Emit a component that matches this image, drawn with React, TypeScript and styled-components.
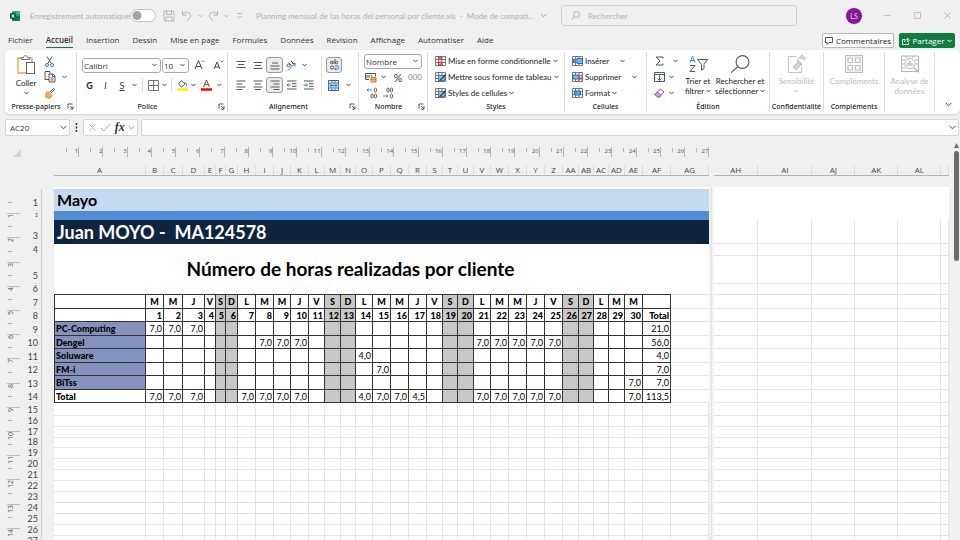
import React from "react";
import styled, { createGlobalStyle, css } from "styled-components";

const GlobalStyle = createGlobalStyle`
  *, *::before, *::after { box-sizing: border-box; }
  html, body { margin: 0; height: 100%; overflow: hidden; background: #f0f0f0; }
  body { font-family: "Open Sans", "Noto Sans", sans-serif; font-size: 8px; color: #333; }
  #root { height: 100%; }
  button, input, select { font: inherit; color: inherit; margin: 0; padding: 0; border: 0; background: none; outline: 0; }
  svg { display: block; flex: none; }
`;

/* ---------- window ---------- */

const Window = styled.div`
  display: flex;
  flex-direction: column;
  height: 100vh;
  overflow: hidden;
`;

const TitleBar = styled.header`
  display: flex;
  align-items: center;
  height: 31px;
  padding-left: 10px;
  font-family: Lato, sans-serif;
  color: #b0b0b0;
  flex: none;
`;

const AutoSave = styled.label`
  display: flex;
  align-items: center;
  justify-content: space-between;
  width: 146px;
  padding: 0 0 0 20px;
  margin-right: 7px;
  white-space: nowrap;
`;

const Brand = styled.span`
  width: 0;
`;

const Toggle = styled.input`
  appearance: none;
  width: 27px;
  height: 13px;
  border: 1px solid #c4c4c4;
  border-radius: 7px;
  background: radial-gradient(circle at 6px 50%, #a3a3a3 4px, #fff 5px);
`;

const QuickTools = styled.div`
  display: flex;
  align-items: center;
  gap: 2px;
  width: 93px;
`;

const DocTitle = styled.div`
  display: flex;
  align-items: center;
  gap: 6px;
  width: 305px;
  white-space: pre;
`;

const SearchBox = styled.label`
  display: flex;
  align-items: center;
  gap: 8px;
  flex: 0 1 236px;
  height: 21px;
  padding-left: 9px;
  border: 1px solid #d0d0d0;
  border-radius: 3px;
  input { flex: 1; min-width: 0; }
  input::placeholder { color: #b4b4b4; opacity: 1; }
`;

const WindowControls = styled.div`
  display: flex;
  align-items: center;
  gap: 21px;
  margin-left: auto;
  padding-right: 8px;
`;

const Avatar = styled.button`
  width: 16px;
  height: 16px;
  border-radius: 50%;
  background: #881798;
  color: #e6c8ea;
  font-size: 7px;
`;

/* ---------- tabs ---------- */

const TabBar = styled.nav`
  display: flex;
  align-items: flex-start;
  height: 19px;
  padding: 2px 5px 0 8px;
  gap: 13px;
  flex: none;
`;

const Tab = styled.button<{ $active?: boolean }>`
  height: 15px;
  line-height: 14px;
  white-space: nowrap;
  border-bottom: 1px solid ${(p) => (p.$active ? "#107c41" : "transparent")};
  font-weight: ${(p) => (p.$active ? 600 : 400)};
`;

const TabActions = styled.div`
  display: flex;
  gap: 5px;
  margin-left: auto;
`;

const ActionButton = styled.button<{ $primary?: boolean }>`
  display: flex;
  align-items: center;
  justify-content: center;
  gap: 3px;
  width: ${(p) => (p.$primary ? 56 : 72)}px;
  height: 15px;
  border-radius: 2px;
  border: 1px solid ${(p) => (p.$primary ? "#107c41" : "#b9b9b9")};
  background: ${(p) => (p.$primary ? "#107c41" : "#fff")};
  color: ${(p) => (p.$primary ? "#fff" : "#222")};
`;

/* ---------- ribbon ---------- */

const Ribbon = styled.section`
  display: flex;
  height: 64px;
  margin-left: 5px;
  padding: 2px 0;
  background: #fff;
  border-radius: 5px;
  box-shadow: 0 1px 2px #cfcfcf;
  font-family: Lato, sans-serif;
  flex: none;
`;

const Group = styled.div<{ $w: number }>`
  display: flex;
  flex-direction: column;
  flex: none;
  width: ${(p) => p.$w}px;
  border-right: 1px solid #dcdcdc;
`;

const GroupBody = styled.div<{ $pad?: number }>`
  display: flex;
  flex: 1;
  min-height: 0;
  padding-left: ${(p) => p.$pad ?? 0}px;
`;

const GroupLabel = styled.div`
  display: flex;
  align-items: center;
  height: 11px;
  font-family: "Noto Sans", sans-serif;
  font-size: 7px;
  font-weight: 500;
  color: #222;
  span { flex: 1; text-align: center; white-space: nowrap; }
  svg { margin-right: 2px; }
`;

const Stack = styled.div<{ $rows: number }>`
  display: grid;
  grid-template-rows: ${(p) => (p.$rows === 3 ? "repeat(3, 16px)" : "20px 20px")};
  align-content: start;
  padding-top: ${(p) => (p.$rows === 3 ? 1 : 3)}px;
`;

const Line = styled.div<{ $gap?: number }>`
  display: flex;
  align-items: center;
  gap: ${(p) => p.$gap ?? 0}px;
`;

const Tool = styled.button<{ $w?: number; $on?: boolean; $bold?: boolean; $italic?: boolean; $underline?: boolean; $large?: boolean }>`
  display: flex;
  align-items: center;
  justify-content: center;
  width: ${(p) => p.$w ?? 17}px;
  height: 16px;
  flex: none;
  font-size: ${(p) => (p.$large ? 11 : 9)}px;
  font-weight: ${(p) => (p.$bold ? 900 : 400)};
  font-style: ${(p) => (p.$italic ? "italic" : "normal")};
  text-decoration: ${(p) => (p.$underline ? "underline" : "none")};
  ${(p) => p.$on && css`border: 1px solid #9c9c9c; border-radius: 3px; background: #ebebeb;`}
`;

const TextTool = styled.button<{ $faint?: boolean }>`
  display: flex;
  align-items: center;
  gap: 2px;
  height: 16px;
  white-space: nowrap;
  color: ${(p) => (p.$faint ? "#888" : "#222")};
`;

const BigTool = styled.button<{ $w: number; $off?: boolean }>`
  display: flex;
  flex-direction: column;
  align-items: center;
  justify-content: flex-start;
  width: ${(p) => p.$w}px;
  padding-top: 3px;
  line-height: 10px;
  color: ${(p) => (p.$off ? "#bcbcbc" : "#222")};
  white-space: nowrap;
  > svg:first-child { margin-bottom: 3px; }
`;

const Inline = styled.span`
  display: flex;
  align-items: center;
  gap: 2px;
  height: 10px;
`;

const ThinRule = styled.i`
  width: 1px;
  height: 14px;
  margin: 0 3px;
  background: #dcdcdc;
`;

const TallRule = styled.i`
  width: 1px;
  height: 40px;
  margin: 4px 4px 0;
  background: #e2e2e2;
`;

const SelectWrap = styled.span<{ $w: number }>`
  display: grid;
  grid-template-columns: 1fr 8px;
  align-items: center;
  width: ${(p) => p.$w}px;
  height: 15px;
  border: 1px solid #aaa;
  border-radius: 3px;
  font-family: "Open Sans", sans-serif;
  select { appearance: none; grid-area: 1 / 1 / 2 / 3; padding-left: 1px; width: 100%; height: 13px; line-height: 13px; }
  svg { grid-area: 1 / 2; pointer-events: none; }
`;

const RibbonEnd = styled.div`
  display: flex;
  flex: 1;
  align-items: flex-end;
  justify-content: flex-end;
  padding: 0 8px 5px 0;
`;

/* ---------- formula bar ---------- */

const FormulaBar = styled.div`
  display: flex;
  align-items: center;
  height: 17px;
  margin: 5px 1px 0 5px;
  flex: none;
`;

const Field = styled.div<{ $w?: number }>`
  display: flex;
  align-items: center;
  justify-content: space-between;
  height: 17px;
  width: ${(p) => (p.$w ? p.$w + "px" : "auto")};
  flex: ${(p) => (p.$w ? "none" : "1")};
  padding: 0 2px 0 4px;
  background: #fff;
  border: 1px solid #d4d4d4;
  border-radius: 2px;
  input { min-width: 0; flex: 1; }
`;

const FxMark = styled.span`
  font: italic 700 12px "Liberation Serif", serif;
`;

/* ---------- sheet ---------- */

const SheetArea = styled.main`
  display: flex;
  flex: 1;
  min-height: 0;
  overflow: hidden;
`;

const SideBar = styled.aside`
  width: 54px;
  flex: none;
  display: flex;
  flex-direction: column;
`;

const Corner = styled.div`
  height: 53px;
  flex: none;
  padding: 13px 0 0 13px;
`;

const SideColumns = styled.div`
  display: flex;
  padding-left: 7px;
`;

const VRuler = styled.div`
  display: flex;
  flex-direction: column;
  width: 25px;
  height: 363px;
  font-size: 7px;
  color: #555;
`;

const VMark = styled.div`
  flex: 1;
  display: flex;
  flex-direction: column;
  justify-content: space-between;
  width: 13px;
  border-top: 1px solid #bdbdbd;
  &:first-child { border-color: transparent; }
  span { writing-mode: vertical-rl; transform: rotate(180deg); width: 7px; height: 9px; line-height: 7px; text-align: right; }
  &::after { content: ""; width: 4px; height: 1px; margin: 0 0 10px 1px; background: #b5b5b5; }
`;

const RowHeads = styled.div`
  width: 10px;
  border-right: 1px solid #c3c9ce;
`;

const RowHead = styled.div<{ $h: number }>`
  display: flex;
  align-items: flex-end;
  justify-content: flex-end;
  height: ${(p) => p.$h}px;
  padding-right: 3px;
  border-bottom: 1px solid #e6e6e6;
  font-family: Lato, sans-serif;
  font-size: ${(p) => (p.$h < 10 ? 5 : 9)}px;
  line-height: ${(p) => (p.$h < 10 ? 8 : p.$h > 20 ? 15 : 10)}px;
  color: #444;
`;

const Pane = styled.div<{ $grow?: boolean }>`
  display: flex;
  flex-direction: column;
  flex: ${(p) => (p.$grow ? "1" : "none")};
  min-width: 0;
  overflow: hidden;
`;

const HRuler = styled.div`
  display: flex;
  height: 10px;
  margin: 11px 0 8px 1px;
  font-size: 6px;
  color: #555;
`;

const HMark = styled.div`
  flex: 1 1 0;
  display: flex;
  justify-content: space-between;
  border-right: 1px solid #b5b5b5;
  line-height: 8px;
  &::before { content: ""; width: 1px; height: 4px; margin: 1px 0 0 11px; background: #b5b5b5; }
`;

const ColHeads = styled.div`
  display: flex;
  height: 11px;
  border-bottom: 1px solid #b4b4b4;
`;

const ColHead = styled.div<{ $w: number }>`
  width: ${(p) => p.$w}px;
  flex: none;
  border-right: 1px solid #dedede;
  text-align: center;
  line-height: 10px;
  color: #444;
  &:last-child { flex: 1; }
`;

const Page = styled.div`
  flex: 1;
  min-height: 0;
  overflow: hidden;
  margin-top: 11px;
  padding-top: 2px;
  background: #fff;
`;

const Grid = styled.table<{ $fill?: boolean }>`
  table-layout: fixed;
  border-collapse: separate;
  border-spacing: 0;
  width: ${(p) => (p.$fill ? "100%" : "655px")};
  font-family: Lato, sans-serif;
  font-size: 9px;
  line-height: 9px;
  color: #000;
`;

const Col = styled.col<{ $w?: number }>`
  width: ${(p) => (p.$w ? p.$w + "px" : "auto")};
`;

const GridRow = styled.tr<{ $h: number }>`
  height: ${(p) => p.$h}px;
`;

const Blank = styled.td<{ $v?: boolean; $h?: boolean }>`
  padding: 0;
  border: 0 solid #e4e4e4;
  border-right-width: ${(p) => (p.$v ? 1 : 0)}px;
  border-bottom-width: ${(p) => (p.$h ? 1 : 0)}px;
`;

const Banner = styled.td<{ $bg: string; $size: number; $white?: boolean }>`
  padding: 0 3px;
  background: ${(p) => p.$bg};
  color: ${(p) => (p.$white ? "#fff" : "#000")};
  font-size: ${(p) => p.$size}px;
  line-height: ${(p) => (p.$size > 10 ? 22 : 5)}px;
  font-weight: 700;
  white-space: pre;
`;

const Heading = styled.td`
  padding: 0 0 2px 4px;
  text-align: center;
  font-size: 19px;
  line-height: 24px;
  font-weight: 700;
  color: #000;
`;

const TopEdge = styled.td`
  padding: 0;
  border-bottom: 1px solid #333;
`;

const Cell = styled.td<{ $gray?: boolean; $strong?: boolean; $align?: string; $first?: boolean; $blue?: boolean }>`
  padding: 0 1px;
  border: 0 solid #333;
  border-width: 0 1px 1px ${(p) => (p.$first ? 1 : 0)}px;
  background: ${(p) => (p.$blue ? "#8592bd" : p.$gray ? "#c8c8c8" : "#fff")};
  font-weight: ${(p) => (p.$strong ? 900 : 400)};
  text-align: ${(p) => p.$align ?? "right"};
  white-space: nowrap;
`;

const Divider = styled.div`
  width: 5px;
  flex: none;
  margin-top: 51px;
  border-left: 2px solid #f0f0f0;
  border-right: 2px solid #f4f4f4;
  background: #e2e2e2;
`;

const ScrollTrack = styled.div`
  display: flex;
  flex-direction: column;
  align-items: center;
  gap: 3px;
  width: 11px;
  flex: none;
  padding: 7px 0 0 3px;
`;

const Thumb = styled.div`
  width: 5px;
  height: 110px;
  border-radius: 3px;
  background: #6c6c6c;
`;

/* ---------- icons ---------- */

type IconProps = { w?: number; h?: number; box?: string; color?: string; sw?: number; children: React.ReactNode };
const Icon = ({ w = 12, h, box, color = "#555", sw = 1, children }: IconProps) => (
  <svg width={w} height={h ?? w} viewBox={box ?? `0 0 ${w} ${h ?? w}`} fill="none" stroke={color} strokeWidth={sw} aria-hidden="true">
    {children}
  </svg>
);

const Chevron = ({ color = "#444", big }: { color?: string; big?: boolean }) => (
  <Icon w={big ? 7 : 5} h={big ? 5 : 4} box="0 0 7 5" color={color} sw={big ? 1 : 1.4}><path d="M.7 1 3.5 3.8 6.3 1" /></Icon>
);

const Launcher = () => (
  <Icon w={7} color="#444" sw={0.9}><path d="M1 5.5V1h4.5M3 3l3 3M6 3.2V6H3.2" /></Icon>
);

const ExcelLogo = () => (
  <Icon w={10} h={10} color="none">
    <rect x="2" width="8" height="10" rx="1" fill="#21a366" />
    <path d="M6 0h3a1 1 0 0 1 1 1v2H6z" fill="#33c481" />
    <path d="M2 5h8v4a1 1 0 0 1-1 1H3a1 1 0 0 1-1-1z" fill="#107c41" />
    <rect y="2" width="6" height="6" rx="1" fill="#0b5c30" />
    <path d="m1.7 3.3 2.6 3.4M4.3 3.3 1.7 6.7" stroke="#fff" strokeWidth="1" />
  </Icon>
);

const SaveIcon = () => <Icon w={12} color="#b4b4b4"><path d="M1 1h9l1 1v9H2l-1-1zM3.5 1v3.5h5V1M3 11V7h6v4" /></Icon>;
const UndoIcon = ({ flip }: { flip?: boolean }) => (
  <Icon w={11} h={12} color="#b4b4b4"><path d={flip ? "M9.5 1v4h-4M9.3 4.8C7.5 2 4.5 1.5 2.5 3.3 0 6 2 8 5.5 11" : "M1.5 1v4h4M1.7 4.8C3.5 2 6.5 1.5 8.5 3.3 11 6 9 8 5.5 11"} /></Icon>
);
const CustomizeIcon = () => <Icon w={7} h={8} color="#b4b4b4"><path d="M1 1.500h5M1.500 4 3.500 6 5.500 4" /></Icon>;

const PasteIcon = () => (
  <Icon w={18} h={20}>
    <path d="M5 3H1v15h8M12 3h3v4" stroke="#e8a33d" strokeWidth="1.3" />
    <path d="M4.500 4.500v-2h2C6.500 0 10.500 0 10.500 2.500h2v2z" stroke="#777" />
    <rect x="9.500" y="7.500" width="8" height="11" stroke="#666" fill="#fff" />
  </Icon>
);
const CutIcon = () => <Icon w={11} h={11}><path d="M3 .5 7.200 7.500M8 .5 3.800 7.500" /><circle cx="3" cy="9" r="1.500" stroke="#2b7cd3" /><circle cx="8" cy="9" r="1.500" stroke="#2b7cd3" /></Icon>;
const CopyIcon = () => <Icon w={12} h={12}><path d="M5 8.500H1v-8h5V2M5 3h4l2 2v6H5zM8.500 3v2.500H11M6.500 7h3M6.500 9h3" /></Icon>;
const BrushIcon = () => <Icon w={11}><path d="m6 4 3.500-3.500 1 1L7 5" /><path d="M4 3.500 8 7.500 5.500 10.500 1 8.500 3 7 1.500 6z" fill="#f3b064" stroke="#d9822b" /></Icon>;

const BordersIcon = () => <Icon w={11} color="#777"><path d="M.5.5h10v10H.5zM5.500.5v10M.5 5.500h10" /></Icon>;
const FillIcon = () => <Icon w={11} h={12}><path d="M4.500 1.500 8 5 4.500 8 1.500 5z" /><path d="M7.500 3.500c2 0 2 2 2 3.500" stroke="#2b7cd3" /><path d="M0 10.500h11" stroke="#fff200" strokeWidth="2.500" /></Icon>;
const FontColorIcon = () => <Icon w={11} h={12}><path d="M2.500 8 5.500 1l3 7M3.500 5.700h4" /><path d="M0 10.500h11" stroke="#f00" strokeWidth="2.500" /></Icon>;
const GrowA = ({ small }: { small?: boolean }) => (
  <Icon w={11} h={12} color="#444"><path d={small ? "M1 10 4 3l3 7M2 8h4" : "M1 10 4.500 1.500 8 10M2.300 7.500h4.400"} /><path d={small ? "m7.500 1.500 1.500 1.500 1.500-1.500" : "M7.500 3 9 1.500 10.500 3"} stroke="#2b7cd3" strokeWidth=".9" /></Icon>
);

const BarsIcon = ({ d }: { d: string }) => <Icon w={10} h={10} color="#444" sw={0.9}><path d={d} /></Icon>;
const ALIGN = {
  top: "M.5 1.500h9M2 4.500h6M.5 7.500h9",
  middle: "M.5 2.500h9M2 5.500h6M.5 8.500h9",
  bottom: "M2 3h6M.5 6h9M.5 9h9",
  left: "M.5 1h9M.5 4h6M.5 7h9M.5 9.500h6",
  center: "M.5 1h9M2 4h6M.5 7h9M2 9.500h6",
  right: "M.5 1h9M3.500 4h6M.5 7h9M3.500 9.500h6",
};
const OrientIcon = () => <Icon w={11}><path d="M2 10.500 9 3.500M6 3.500h3v3" stroke="#2b7cd3" /><circle cx="2.500" cy="5.500" r="1.500" /><path d="M2.500 2.500 5.500 5.500M5 1l2 2" /></Icon>;
const IndentIcon = ({ out }: { out?: boolean }) => <Icon w={11} h={10}><path d="M1 1h9.500M6 3.700h4.500M6 6.300h4.500M1 9h9.500" /><path d={out ? "M5 5H1M2.500 3.500 1 5l1.500 1.500" : "M.5 5h4M3 3.500 4.500 5 3 6.500"} stroke="#2b7cd3" /></Icon>;
const WrapIcon = () => <Icon w={11} h={12}><circle cx="2.500" cy="3.500" r="1.300" /><path d="M4 2v3M6 0v5" /><circle cx="7.500" cy="3.500" r="1.300" /><circle cx="3" cy="8.500" r="1.500" /><path d="M5.500 7h3c2 0 2 3 0 3H5.500M7 8.500 5.500 10 7 11.500" stroke="#2b7cd3" /></Icon>;
const MergeIcon = () => <Icon w={11}><path d="M.5.5h10v10H.5zM4 .5v2M7 .5v2M4 8.500v2M7 8.500v2" /><rect x=".5" y="3" width="10" height="5" fill="#b9dcf5" stroke="#2b7cd3" /><path d="M2 5.500h7M3.500 4.300 2 5.500l1.500 1.200M7.500 4.300 9 5.500 7.500 6.700" stroke="#2b7cd3" /></Icon>;
const MoneyIcon = () => <Icon w={12} h={11}><path d="M.5 1.500h10v3M.5 1.500v6H4M4 3v3M2 3v3M6.500 3v1.500" /><path d="M6 5.500h5v4.500H6zM6 7.700h5" fill="#f6c08b" stroke="#d9722b" /></Icon>;
const DecimalIcon = ({ less }: { less?: boolean }) => (
  <Icon w={12} h={12} sw={0.9}>
    <path d={less ? "M1 9h5M4.500 7.500 6 9 4.500 10.500" : "M6 3H1M2.500 1.500 1 3l1.500 1.500"} stroke="#2b7cd3" />
    <ellipse cx="9.500" cy="3" rx="1.200" ry="2" /><ellipse cx="9.500" cy="9" rx="1.200" ry="2" />
    {less ? <ellipse cx="6" cy="3" rx="1.200" ry="2" /> : <ellipse cx="6" cy="9" rx="1.200" ry="2" />}
  </Icon>
);

const TableIcon = ({ kind }: { kind: "cond" | "table" | "style" | "insert" | "delete" | "format" }) => (
  <Icon w={11} h={10}>
    <path d="M.5.5h10v9H.5zM.5 3.500h10M.5 6.500h10M3.500.5v9M7 .5v9" stroke="#777" />
    {kind === "cond" && <path d="M3.500 1h3v2.500h-3zM3.500 6h3.500v3H3.500z" fill="#e98a92" stroke="#c8323f" />}
    {(kind === "table" || kind === "style") && <><path d="M3.500 3.500h6v5h-6z" fill="#9ccbf0" stroke="#2b7cd3" /><path d="M10.500 2.500 5 8.500" stroke="#444" strokeWidth="1.400" /></>}
    {kind === "insert" && <path d="M5 2.500h5.500v5H5zM4.500 5H1M2.500 3.500 1 5l1.500 1.500" fill="#7db9ec" stroke="#1d72c8" />}
    {kind === "delete" && <><path d="M1 3h6v4H1z" fill="#7db9ec" stroke="#1d72c8" /><path d="m6 4 4.500 5M10.500 4 6 9" stroke="#d04040" /></>}
    {kind === "format" && <path d="M2.500 3h6v4h-6z" fill="#5aa6e6" stroke="#1d72c8" />}
  </Icon>
);

const SigmaIcon = () => <Icon w={9} h={10}><path d="M8 2.500V1H1l4 4-4 4h7V7.500" /></Icon>;
const FillDownIcon = () => <Icon w={11} h={10}><path d="M.5.5h10v9H.5zM.5 2.500h10" /><path d="M5.500 3.500v5M3.500 6.500l2 2 2-2" stroke="#1d72c8" /></Icon>;
const EraserIcon = () => <Icon w={11} h={10} color="#a33fb5"><path d="M6.500 1 10 4 5.500 9H3.500L1 6.500z" /><path d="M1 6.500 3.500 4 7 7.300 5.500 9H3.500z" fill="#dba5e3" /></Icon>;
const SortIcon = () => <Icon w={19} h={18}><path d="M1 7.500 3.500 1 6 7.500M2 5.500h3" stroke="#2b88d8" /><path d="M1 10.500h5l-5 6h5" /><path d="M8.500 4.500h10L15 9.500v4l-2.500 1.500V9.500z" /></Icon>;
const FindIcon = () => <Icon w={20} h={18} sw={1.1}><circle cx="12.500" cy="7" r="6.400" /><path d="M8 11.500 1 17.800" /></Icon>;
const SensIcon = () => <Icon w={18} h={18} color="#c4c4c4"><path d="M.5 1.500h8M.5 1.500v16h13V12" /><path d="m5 12 6-6 3 3-6 6zM13 2l4 4M10 4l4-4 4 4" fill="#d5d5d5" /><path d="m9 5 5 5" strokeWidth="2" /></Icon>;
const AddinIcon = () => <Icon w={18} h={18} color="#bdbdbd" sw={1.2}><path d="M.6.6h16.800v16.800H.6z" /><path d="M3 3h4.500v4.500H3zM10.500 3H15v4.500h-4.500zM3 10.500h4.500V15H3zM10.500 10.500H15V15h-4.500z" /></Icon>;
const AnalyseIcon = () => <Icon w={18} h={18} color="#b4b4b4"><path d="M.5 1h17v15.500H.5zM.5 5h4M.5 9h3M.5 13h4M14 5h3.500M15 9h2.500M5 1v2M12 1v2" /><circle cx="9" cy="8.500" r="5" fill="#fff" /><path d="M7 11V7.500M9 11V5.500M11 11V8M13 12.500l4.500 5" strokeWidth="1.300" /></Icon>;

/* ---------- data ---------- */

const COLS: [string, number][] = [
  ["A", 92], ["B", 18], ["C", 19], ["D", 22], ["E", 11], ["F", 10], ["G", 12], ["H", 18], ["I", 18], ["J", 17], ["K", 18],
  ["L", 16], ["M", 16], ["N", 15], ["O", 17], ["P", 18], ["Q", 18], ["R", 18], ["S", 16], ["T", 15], ["U", 16], ["V", 17],
  ["W", 18], ["X", 18], ["Y", 18], ["Z", 18], ["AA", 16], ["AB", 15], ["AC", 15], ["AD", 16], ["AE", 18], ["AF", 28], ["AG", 38],
];
const RIGHT_COLS: [string, number][] = [["AH", 44], ["AI", 54], ["AJ", 43], ["AK", 43], ["AL", 43], ["", 9]];
const ROW_H = [22, 9, 24, 12, 28, 11, 14, 13, 14, 13, 14, 13, 14, 13, 13, 11, 11, 10, 11, 11, 11, 11, 11, 11, 11, 11, 11];
const WEEK = "MMJVSDLMMJVSDLMMJVSDLMMJVSDLMM".split("");
const isWeekend = (day: number) => WEEK[day - 1] === "S" || WEEK[day - 1] === "D";

const fill = (days: number[], v: string) => Object.fromEntries(days.map((d) => [d, v])) as Record<number, string>;
const CLIENTS: { name: string; hours: Record<number, string>; total: string }[] = [
  { name: "PC-Computing", hours: fill([1, 2, 3], "7,0"), total: "21,0" },
  { name: "Dengel", hours: fill([8, 9, 10, 21, 22, 23, 24, 25], "7,0"), total: "56,0" },
  { name: "Soluware", hours: { 14: "4,0" }, total: "4,0" },
  { name: "FM-i", hours: { 15: "7,0" }, total: "7,0" },
  { name: "BiTss", hours: { 30: "7,0" }, total: "7,0" },
  { name: "Total", hours: { ...fill([1, 2, 3, 7, 8, 9, 10, 15, 16, 21, 22, 23, 24, 25, 30], "7,0"), 14: "4,0", 17: "4,5" }, total: "113,5" },
];
const TABS = ["Fichier", "Accueil", "Insertion", "Dessin", "Mise en page", "Formules", "Données", "Révision", "Affichage", "Automatiser", "Aide"];

const Sheet = () => (
  <Grid>
    <colgroup>{COLS.map(([n, w]) => <Col key={n} $w={w} />)}</colgroup>
    <tbody>
      <GridRow $h={22}><Banner colSpan={33} $bg="#c5d9f1" $size={16}>Mayo</Banner></GridRow>
      <GridRow $h={9}><Banner colSpan={33} $bg="#538dd5" $size={5} /></GridRow>
      <GridRow $h={24}><Banner colSpan={33} $bg="#0f243e" $size={18} $white>{"Juan MOYO -  MA124578"}</Banner></GridRow>
      <GridRow $h={12}><Blank colSpan={33} /></GridRow>
      <GridRow $h={28}><Heading colSpan={31}>Número de horas realizadas por cliente</Heading><Blank colSpan={2} /></GridRow>
      <GridRow $h={11}><TopEdge colSpan={32} /><Blank $h /></GridRow>
      <GridRow $h={14}>
        <Cell $first />
        {WEEK.map((d, i) => <Cell key={i} $strong $align="center" $gray={isWeekend(i + 1)}>{d}</Cell>)}
        <Cell /><Blank $h />
      </GridRow>
      <GridRow $h={13}>
        <Cell $first />
        {WEEK.map((_, i) => <Cell key={i} $strong $gray={isWeekend(i + 1)}>{i + 1}</Cell>)}
        <Cell $strong>Total</Cell><Blank $h />
      </GridRow>
      {CLIENTS.map((c, r) => (
        <GridRow key={c.name} $h={ROW_H[8 + r]}>
          <Cell $first $strong $align="left" $blue={c.name !== "Total"}>{c.name}</Cell>
          {WEEK.map((_, i) => <Cell key={i} $gray={isWeekend(i + 1)}>{c.hours[i + 1]}</Cell>)}
          <Cell>{c.total}</Cell><Blank $h />
        </GridRow>
      ))}
      {ROW_H.slice(14).map((h, r) => (
        <GridRow key={r} $h={h}>{COLS.map(([n]) => <Blank key={n} $v $h />)}</GridRow>
      ))}
    </tbody>
  </Grid>
);

const SideSheet = () => (
  <Grid $fill>
    <colgroup>{RIGHT_COLS.map(([n, w], i) => <Col key={n} $w={i === 5 ? undefined : w} />)}</colgroup>
    <tbody>
      {ROW_H.map((h, r) => (
        <GridRow key={r} $h={h}>{RIGHT_COLS.map(([n]) => <Blank key={n} $v={r > 1} $h={r > 1} />)}</GridRow>
      ))}
    </tbody>
  </Grid>
);

export default function App() {
  return (
    <>
      <GlobalStyle />
      <Window>
        <TitleBar>
          <Brand><ExcelLogo /></Brand>
          <AutoSave>Enregistrement automatique <Toggle type="checkbox" /></AutoSave>
          <QuickTools>
            <Tool aria-label="Enregistrer" $w={12}><SaveIcon /></Tool>
            <Tool aria-label="Annuler" $w={19}><UndoIcon /></Tool>
            <Chevron color="#b4b4b4" />
            <Tool aria-label="Rétablir" $w={17}><UndoIcon flip /></Tool>
            <Chevron color="#b4b4b4" />
            <Tool aria-label="Personnaliser"><CustomizeIcon /></Tool>
          </QuickTools>
          <DocTitle>
            <span>Planning mensual de las horas del personal por cliente.xls  -  Mode de compati...</span>
            <Chevron color="#a0a0a0" big />
          </DocTitle>
          <SearchBox>
            <Icon w={9} h={10} color="#b4b4b4"><circle cx="5.500" cy="3.500" r="3" /><path d="M3.300 5.700.5 9" /></Icon>
            <input type="search" placeholder="Rechercher" aria-label="Rechercher" />
          </SearchBox>
          <WindowControls>
            <Avatar>LS</Avatar>
            <Tool aria-label="Réduire" $w={9}><Icon w={7} color="#c4c4c4"><path d="M0 3.500h7" /></Icon></Tool>
            <Tool aria-label="Agrandir" $w={9}><Icon w={7} color="#c4c4c4"><path d="M.5.5h6v6h-6z" /></Icon></Tool>
            <Tool aria-label="Fermer" $w={9}><Icon w={7} color="#b4b4b4"><path d="m.5.5 6 6M6.500.5l-6 6" /></Icon></Tool>
          </WindowControls>
        </TitleBar>

        <TabBar>
          {TABS.map((t) => <Tab key={t} $active={t === "Accueil"}>{t}</Tab>)}
          <TabActions>
            <ActionButton>
              <Icon w={8} h={8} color="#444" sw={0.9}><path d="M.5.5h7v5H4L2 7.500v-2H.5z" /></Icon>Commentaires
            </ActionButton>
            <ActionButton $primary>
              <Icon w={8} h={8} color="#fff" sw={0.9}><path d="M3 2.500H.5v5h6V5.500M2.500 5c0-2 1.500-2.500 3-2.500V1l2 2-2 2V3.500" /></Icon>Partager
              <Chevron color="#fff" />
            </ActionButton>
          </TabActions>
        </TabBar>

        <Ribbon>
          <Group $w={72}>
            <GroupBody $pad={6}>
              <BigTool $w={30}><PasteIcon />Coller<Inline><Chevron /></Inline></BigTool>
              <Stack $rows={3}>
                <Line><Tool aria-label="Couper"><CutIcon /></Tool></Line>
                <Line><Tool aria-label="Copier"><CopyIcon /></Tool><Tool aria-label="Options de copie" $w={12}><Chevron /></Tool></Line>
                <Line><Tool aria-label="Reproduire la mise en forme"><BrushIcon /></Tool></Line>
              </Stack>
            </GroupBody>
            <GroupLabel><span>Presse-papiers</span><Launcher /></GroupLabel>
          </Group>

          <Group $w={151}>
            <GroupBody $pad={5}>
              <Stack $rows={2}>
                <Line $gap={1}>
                  <SelectWrap $w={79}><select aria-label="Police"><option>Calibri</option></select><Chevron /></SelectWrap>
                  <SelectWrap $w={27}><select aria-label="Taille"><option>10</option></select><Chevron /></SelectWrap>
                  <Tool aria-label="Agrandir la police" $w={19}><GrowA /></Tool>
                  <Tool aria-label="Réduire la police" $w={16}><GrowA small /></Tool>
                </Line>
                <Line>
                  <Tool $w={15} $bold>G</Tool>
                  <Tool $w={17} $italic>I</Tool>
                  <Tool $w={16} $underline>S</Tool>
                  <Tool aria-label="Options de soulignement" $w={9}><Chevron /></Tool>
                  <ThinRule />
                  <Tool aria-label="Bordures" $w={14}><BordersIcon /></Tool>
                  <Tool aria-label="Options de bordure" $w={8}><Chevron /></Tool>
                  <ThinRule />
                  <Tool aria-label="Remplissage" $w={14}><FillIcon /></Tool>
                  <Tool aria-label="Options de remplissage" $w={9}><Chevron /></Tool>
                  <Tool aria-label="Couleur de police" $w={17}><FontColorIcon /></Tool>
                  <Tool aria-label="Options de couleur" $w={9}><Chevron /></Tool>
                </Line>
              </Stack>
            </GroupBody>
            <GroupLabel><span>Police</span><Launcher /></GroupLabel>
          </Group>

          <Group $w={131}>
            <GroupBody $pad={4}>
              <Stack $rows={2}>
                <Line>
                  <Tool aria-label="Aligner en haut"><BarsIcon d={ALIGN.top} /></Tool>
                  <Tool aria-label="Aligner au centre"><BarsIcon d={ALIGN.middle} /></Tool>
                  <Tool aria-label="Aligner en bas" $on><BarsIcon d={ALIGN.bottom} /></Tool>
                  <Tool aria-label="Orientation"><OrientIcon /></Tool>
                  <Tool aria-label="Options d'orientation" $w={8}><Chevron /></Tool>
                </Line>
                <Line>
                  <Tool aria-label="Aligner à gauche"><BarsIcon d={ALIGN.left} /></Tool>
                  <Tool aria-label="Centrer"><BarsIcon d={ALIGN.center} /></Tool>
                  <Tool aria-label="Aligner à droite" $on><BarsIcon d={ALIGN.right} /></Tool>
                  <Tool aria-label="Diminuer le retrait"><IndentIcon out /></Tool>
                  <Tool aria-label="Augmenter le retrait"><IndentIcon /></Tool>
                </Line>
              </Stack>
              <TallRule />
              <Stack $rows={2}>
                <Line><Tool aria-label="Renvoyer à la ligne" $on $w={16}><WrapIcon /></Tool></Line>
                <Line><Tool aria-label="Fusionner" $w={15}><MergeIcon /></Tool><Tool aria-label="Options de fusion" $w={15}><Chevron /></Tool></Line>
              </Stack>
            </GroupBody>
            <GroupLabel><span>Alignement</span><Launcher /></GroupLabel>
          </Group>

          <Group $w={69}>
            <GroupBody $pad={5}>
              <Stack $rows={3}>
                <Line><SelectWrap $w={58}><select aria-label="Format de nombre"><option>Nombre</option></select><Chevron /></SelectWrap></Line>
                <Line>
                  <Tool aria-label="Format comptabilité" $w={14}><MoneyIcon /></Tool>
                  <Tool aria-label="Options de devise" $w={10}><Chevron /></Tool>
                  <Tool $w={20} $large>%</Tool>
                  <TextTool $faint>000</TextTool>
                </Line>
                <Line>
                  <Tool aria-label="Ajouter une décimale" $w={16}><DecimalIcon /></Tool>
                  <Tool aria-label="Réduire les décimales" $w={16}><DecimalIcon less /></Tool>
                </Line>
              </Stack>
            </GroupBody>
            <GroupLabel><span>Nombre</span><Launcher /></GroupLabel>
          </Group>

          <Group $w={137}>
            <GroupBody $pad={7}>
              <Stack $rows={3}>
                <TextTool><TableIcon kind="cond" />Mise en forme conditionnelle<Chevron /></TextTool>
                <TextTool><TableIcon kind="table" />Mettre sous forme de tableau<Chevron /></TextTool>
                <TextTool><TableIcon kind="style" />Styles de cellules<Chevron /></TextTool>
              </Stack>
            </GroupBody>
            <GroupLabel><span>Styles</span></GroupLabel>
          </Group>

          <Group $w={82}>
            <GroupBody $pad={7}>
              <Stack $rows={3}>
                <Line $gap={11}><TextTool><TableIcon kind="insert" />Insérer</TextTool><Chevron /></Line>
                <Line $gap={11}><TextTool><TableIcon kind="delete" />Supprimer</TextTool><Chevron /></Line>
                <TextTool><TableIcon kind="format" />Format<Chevron /></TextTool>
              </Stack>
            </GroupBody>
            <GroupLabel><span>Cellules</span></GroupLabel>
          </Group>

          <Group $w={123}>
            <GroupBody $pad={4}>
              <Stack $rows={3}>
                <Line><Tool aria-label="Somme automatique"><SigmaIcon /></Tool><Tool aria-label="Options de somme" $w={14}><Chevron /></Tool></Line>
                <Line><Tool aria-label="Recopier"><FillDownIcon /></Tool><Tool aria-label="Options de recopie" $w={6}><Chevron /></Tool></Line>
                <Line><Tool aria-label="Effacer"><EraserIcon /></Tool><Tool aria-label="Options d'effacement" $w={6}><Chevron /></Tool></Line>
              </Stack>
              <BigTool $w={32}><SortIcon />Trier et<Inline>filtrer<Chevron /></Inline></BigTool>
              <BigTool $w={52}><FindIcon />Rechercher et<Inline>sélectionner<Chevron /></Inline></BigTool>
            </GroupBody>
            <GroupLabel><span>Édition</span></GroupLabel>
          </Group>

          <Group $w={54}>
            <GroupBody><BigTool $w={53} $off><SensIcon />Sensibilité<Inline><Chevron color="#c4c4c4" /></Inline></BigTool></GroupBody>
            <GroupLabel><span>Confidentialité</span></GroupLabel>
          </Group>
          <Group $w={61}>
            <GroupBody><BigTool $w={60} $off><AddinIcon />Compléments</BigTool></GroupBody>
            <GroupLabel><span>Compléments</span></GroupLabel>
          </Group>
          <Group $w={50}>
            <GroupBody><BigTool $w={49} $off><AnalyseIcon />Analyse de<span>données</span></BigTool></GroupBody>
          </Group>
          <RibbonEnd><Chevron big /></RibbonEnd>
        </Ribbon>

        <FormulaBar>
          <Field $w={65}><input aria-label="Zone Nom" defaultValue="AC20" /><Chevron big /></Field>
          <Tool aria-label="Déplacer" $w={13}><Icon w={3} h={9} color="#333" sw={1.5}><path d="M1.500 0v2M1.500 3.500v2M1.500 7v2" /></Icon></Tool>
          <Field $w={55}>
            <Icon w={9} color="#b8b8b8"><path d="m1 1 7 7M8 1 1 8" /></Icon>
            <Icon w={11} h={9} color="#b8b8b8"><path d="m1 5 3 3 6-7" /></Icon>
            <FxMark>fx</FxMark>
            <Chevron big color="#999" />
          </Field>
          <Tool aria-label="Séparateur" $w={3} />
          <Field><input aria-label="Barre de formule" /><Chevron big /></Field>
        </FormulaBar>

        <SheetArea>
          <SideBar>
            <Corner><Icon w={8} color="none"><path d="M8 0v8H0z" fill="#d6d6d6" /></Icon></Corner>
            <SideColumns>
              <VRuler>{Array.from({ length: 15 }, (_, i) => <VMark key={i}><span>{i || ""}</span></VMark>)}</VRuler>
              <RowHeads>{ROW_H.map((h, i) => <RowHead key={i} $h={h}>{i + 1}</RowHead>)}</RowHeads>
            </SideColumns>
          </SideBar>
          <Pane>
            <HRuler>{Array.from({ length: 27 }, (_, i) => <HMark key={i}>{i + 1}</HMark>)}</HRuler>
            <ColHeads>{COLS.map(([n, w]) => <ColHead key={n} $w={w}>{n}</ColHead>)}</ColHeads>
            <Page><Sheet /></Page>
          </Pane>
          <Divider />
          <Pane $grow>
            <HRuler />
            <ColHeads>{RIGHT_COLS.map(([n, w]) => <ColHead key={n} $w={w}>{n}</ColHead>)}</ColHeads>
            <Page><SideSheet /></Page>
          </Pane>
          <ScrollTrack>
            <Icon w={5} h={5} color="none"><path d="M2.500 0 5 5H0z" fill="#6c6c6c" /></Icon>
            <Thumb />
          </ScrollTrack>
        </SheetArea>
      </Window>
    </>
  );
}
